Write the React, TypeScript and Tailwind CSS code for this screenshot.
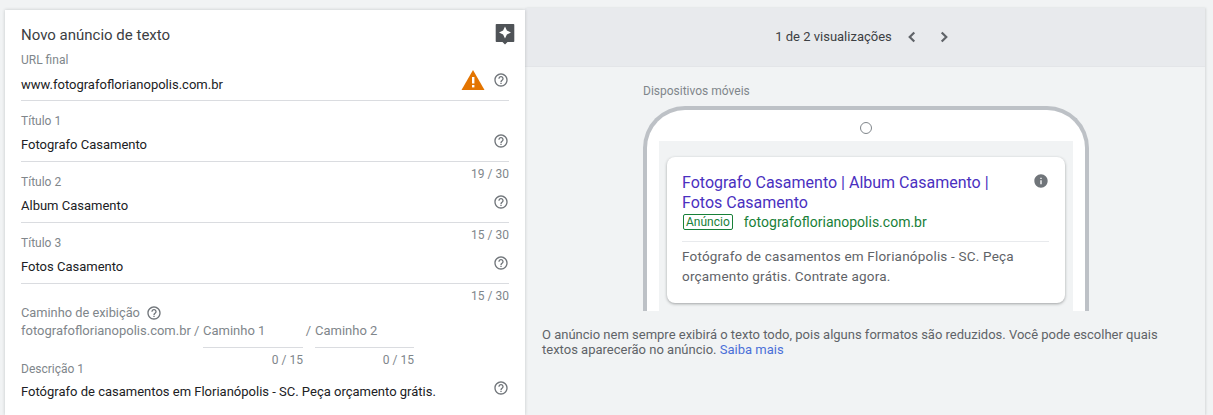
import React from 'react';

const HelpIcon: React.FC = () => (
    <svg width="16" height="16" viewBox="0 0 24 24" fill="#70757a" className="shrink-0">
        <path d="M11 18h2v-2h-2v2zm1-16C6.48 2 2 6.48 2 12s4.48 10 10 10 10-4.48 10-10S17.52 2 12 2zm0 18c-4.41 0-8-3.59-8-8s3.59-8 8-8 8 3.59 8 8-3.59 8-8 8zm0-14c-2.21 0-4 1.79-4 4h2c0-1.1.9-2 2-2s2 .9 2 2c0 2-3 1.75-3 5h2c0-2.25 3-2.5 3-5 0-2.21-1.79-4-4-4z" />
    </svg>
);

const WarningIcon: React.FC = () => (
    <svg width="24" height="22" viewBox="0 0 24 22" className="shrink-0">
        <path d="M12 1 L23.5 21 H0.5 Z" fill="#e37400" />
        <rect x="11" y="8" width="2.4" height="6.5" fill="#fff" />
        <rect x="11" y="16" width="2.4" height="2.4" fill="#fff" />
    </svg>
);

const FeedbackIcon: React.FC = () => (
    <svg width="20" height="22" viewBox="0 0 20 22" className="shrink-0">
        <path d="M1.5 1h17a.8.8 0 0 1 .8.8v16.4a.8.8 0 0 1-.8.8h-6l-2.5 2.5L7.5 19h-6a.8.8 0 0 1-.8-.8V1.800a.8.8 0 0 1 .8-.8z" fill="#4f5357" />
        <path d="M10 3.500l1.900 4.100 4.100 1.900-4.100 1.900-1.900 4.100-1.900-4.100L4 9.500l4.100-1.900z" fill="#fff" />
    </svg>
);

type FieldProps = {
    label: string;
    value: string;
    counter?: string;
};

const Field: React.FC<FieldProps> = ({ label, value, counter }) => (
    <div className="border-b border-[#dadce0]">
        <div className="flex justify-between h-[34px]">
            <span className="text-xs text-[#80868b] pt-[11px] leading-[18px]">{label}</span>
            <span className="text-xs text-[#80868b] leading-[14px] pt-[5px]">{counter}</span>
        </div>
        <div className="flex justify-between items-start h-[26px]">
            <span className="text-[13px] leading-[20px] text-[#202124]">{value}</span>
            <span className="mt-[-2px]"><HelpIcon /></span>
        </div>
    </div>
);

const App: React.FC = () => {
    return (
        <div className="h-[415px] w-[1213px] overflow-hidden bg-[#f1f3f4] flex pl-[5px] pt-[10px] font-['Roboto',sans-serif]">
            {/* Formulario */}
            <div className="w-[520px] h-[405px] bg-white px-[16px] shadow-[0_0_3px_rgba(60,64,67,0.25)] z-10 overflow-hidden">
                <div className="flex justify-between items-start pt-[14px] h-[41px]">
                    <span className="text-[15px] leading-[22px] text-[#3c4043]">Novo anúncio de texto</span>
                    <span className="mt-[-1px] mr-[-6px]"><FeedbackIcon /></span>
                </div>
                <div className="text-xs leading-[18px] text-[#80868b]">URL final</div>
                <div className="flex justify-between items-start h-[33px] pt-[6px] border-b border-[#dadce0] mt-[-1px]">
                    <span className="text-[13px] leading-[20px] text-[#202124] mt-[1px]">www.fotografoflorianopolis.com.br</span>
                    <span className="flex items-start gap-[8px] mt-[-6px]">
                        <span className="mt-[1px]"><WarningIcon /></span>
                        <span className="mt-[4px]"><HelpIcon /></span>
                    </span>
                </div>
                <Field label="Título 1" value="Fotografo Casamento" />
                <Field label="Título 2" value="Album Casamento" counter="19 / 30" />
                <Field label="Título 3" value="Fotos Casamento" counter="15 / 30" />
                <div className="flex justify-between h-[21px]">
                    <span />
                    <span className="text-xs text-[#80868b] leading-[14px] pt-[5px]">15 / 30</span>
                </div>
                <div className="flex items-center gap-[6px] h-[16px] text-[12.800px] text-[#80868b]">
                    Caminho de exibição
                    <HelpIcon />
                </div>
                <div className="flex mt-[1px] text-[13px] leading-[18px] text-[#80868b]">
                    <span className="w-[182px]">fotografoflorianopolis.com.br /</span>
                    <div className="w-[100px]">
                        <div className="h-[26px] border-b border-[#dadce0]">Caminho 1</div>
                        <div className="text-xs leading-[14px] text-right pt-[5px]">0 / 15</div>
                    </div>
                    <span className="w-[12px] text-right pr-[4px]">/</span>
                    <div className="w-[99px]">
                        <div className="h-[26px] border-b border-[#dadce0]">Caminho 2</div>
                        <div className="text-xs leading-[14px] text-right pt-[5px]">0 / 15</div>
                    </div>
                </div>
                <div className="text-xs leading-[18px] text-[#80868b] mt-[-7px]">Descrição 1</div>
                <div className="flex justify-between items-start mt-[4px]">
                    <span className="text-[13px] leading-[20px] text-[#202124]">Fotógrafo de casamentos em Florianópolis - SC. Peça orçamento grátis.</span>
                    <span className="mt-[-2px]"><HelpIcon /></span>
                </div>
            </div>

            {/* Pre-visualizacao */}
            <div className="w-[680px] h-[407px] mt-[-2px] flex flex-col shadow-[1px_0_2px_rgba(60,64,67,0.15)]">
                <div className="h-[59px] pb-[1px] shrink-0 bg-[#e8eaed] flex items-center justify-center gap-[9px] border-b border-[#e3e5e8]">
                    <span className="text-[13px] text-[#3c4043]">1 de 2 visualizações</span>
                    <svg width="22" height="22" viewBox="0 0 24 24" fill="none" stroke="#5f6368" strokeWidth="2.400">
                        <path d="M14.500 7l-5 5 5 5" />
                    </svg>
                    <svg width="22" height="22" viewBox="0 0 24 24" fill="none" stroke="#5f6368" strokeWidth="2.400" className="ml-[1px]">
                        <path d="M9.500 7l5 5-5 5" />
                    </svg>
                </div>
                <div className="pl-[118px] pt-[16px] text-xs leading-[16px] text-[#80868b]">Dispositivos móveis</div>
                <div className="ml-[118px] mt-[7px] w-[446px] h-[205px] shrink-0 border-x-[4px] border-t-[4px] border-[#bdc1c6] rounded-t-[42px] bg-white px-[12px] overflow-hidden">
                    <div className="h-[31px] flex items-center justify-center">
                        <span className="w-[12px] h-[12px] mt-[5px] rounded-full border border-[#80868b]" />
                    </div>
                    <div className="bg-[#f1f3f4] h-[170px] px-[8px] pt-[16px]">
                        <div className="h-[146px] bg-white rounded-[8px] shadow-[0_1px_3px_rgba(60,64,67,0.45)] pl-[15px] pr-[16px] pt-[16px]">
                            <div className="flex justify-between items-start">
                                <div className="w-[320px] text-base leading-[20px] text-[#4a30c0]">Fotografo Casamento | Album Casamento | Fotos Casamento</div>
                                <svg width="16" height="16" viewBox="0 0 24 24" fill="#70757a">
                                    <path d="M12 2C6.480 2 2 6.480 2 12s4.480 10 10 10 10-4.480 10-10S17.520 2 12 2zm1 15h-2v-6h2v6zm0-8h-2V7h2v2z" />
                                </svg>
                            </div>
                            <div className="flex items-center h-[18px]">
                                <span className="ml-[1px] border border-[#188038] rounded-[2px] text-xs leading-[14px] px-[2px] text-[#188038]">Anúncio</span>
                                <span className="ml-[11px] text-sm text-[#188038]">fotografoflorianopolis.com.br</span>
                            </div>
                            <div className="border-t border-[#e8eaed] mt-[10px] pt-[4px] text-[13.500px] leading-[20px] tracking-[0.2px] text-[#5f6368]">
                                Fotógrafo de casamentos em Florianópolis - SC. Peça<br />orçamento grátis. Contrate agora.
                            </div>
                        </div>
                    </div>
                </div>
                <p className="ml-[17px] mt-[16px] w-[630px] text-[13px] leading-[15px] text-[#5f6368]">
                    O anúncio nem sempre exibirá o texto todo, pois alguns formatos são reduzidos. Você pode escolher quais textos aparecerão no anúncio. <span className="text-[#4a6fd8]">Saiba mais</span>
                </p>
            </div>
        </div>
    );
};

export default App;
